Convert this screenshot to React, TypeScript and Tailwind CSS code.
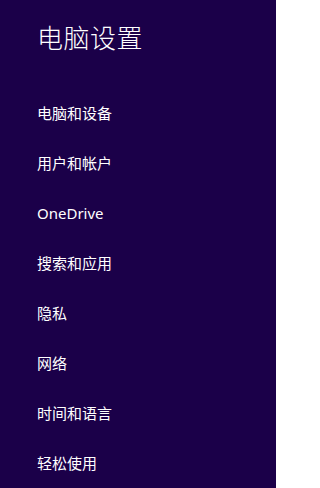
import React from "react";

const items = [
  "电脑和设备",
  "用户和帐户",
  "OneDrive",
  "搜索和应用",
  "隐私",
  "网络",
  "时间和语言",
  "轻松使用",
];

export default function App() {
  return (
    <div
      className="w-[276px] h-[488px] overflow-hidden bg-[#1b0049] text-white pl-[37px]"
      style={{ fontFamily: '"Segoe UI", "Noto Sans", "Noto Sans CJK SC", sans-serif' }}
    >
      <div className="pt-[20px] h-[56px] flex items-center text-[26px] font-light leading-[36px] tracking-[0.5px]">
        电脑设置
      </div>
      <div className="mt-[32px] flex flex-col">
        {items.map((t) => (
          <div key={t} className="h-[50px] flex items-center text-[15px] leading-[20px]">
            {t}
          </div>
        ))}
      </div>
    </div>
  );
}
